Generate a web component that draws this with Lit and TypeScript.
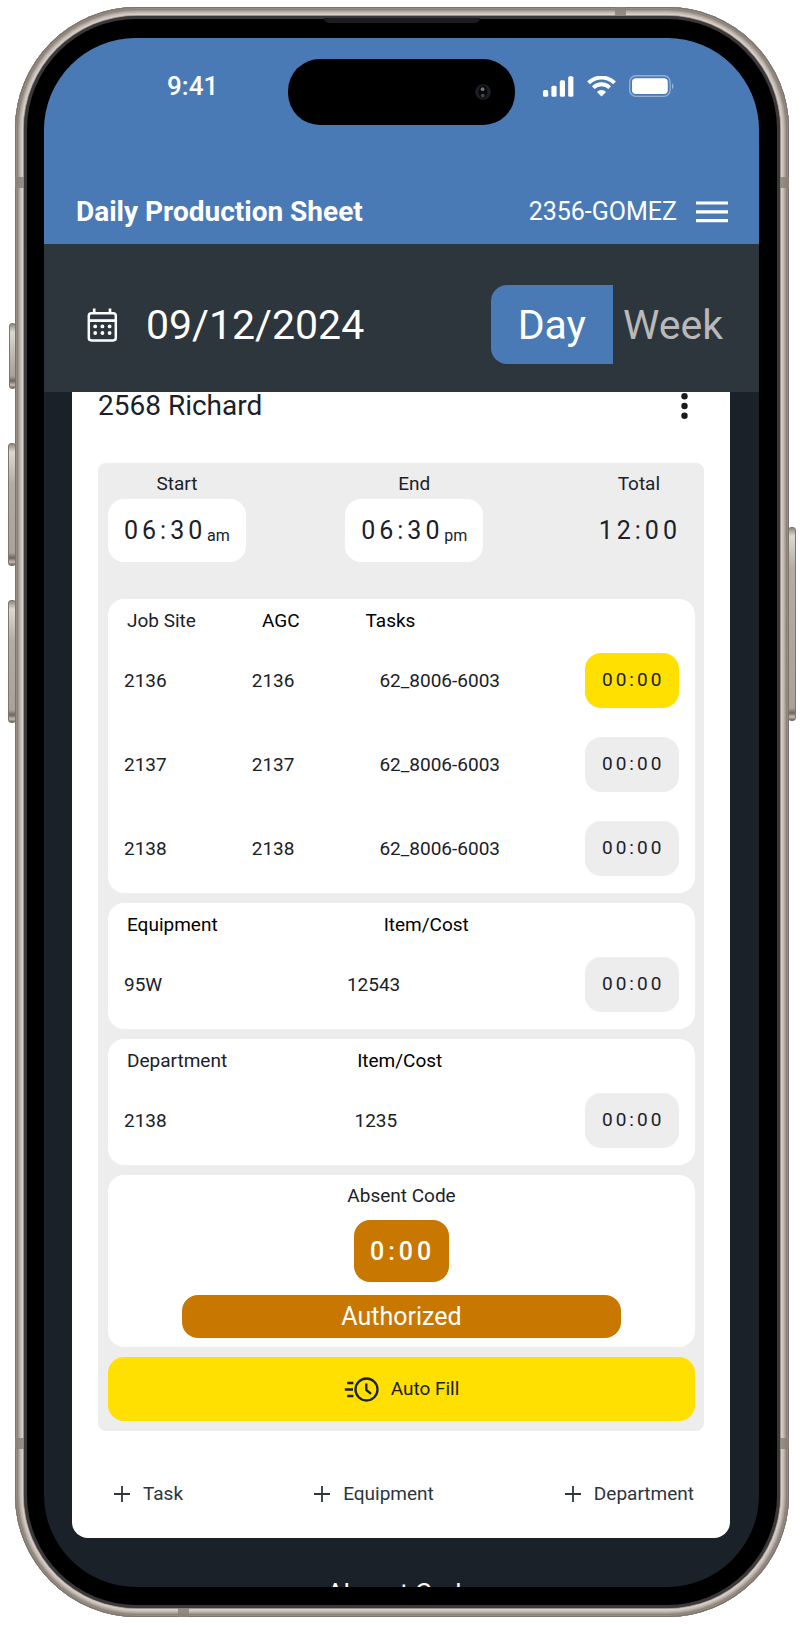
import { LitElement, html, css, svg, nothing } from "lit";
import { customElement, property, state } from "lit/decorators.js";
import { classMap } from "lit/directives/class-map.js";

interface Entry {
  cells: string[];
  hours: string;
  active?: boolean;
}

interface Section {
  id: string;
  headings: { text: string; strong?: boolean }[];
  entries: Entry[];
}

const SECTIONS: Section[] = [
  {
    id: "jobs",
    headings: [
      { text: "Job Site" },
      { text: "AGC", strong: true },
      { text: "Tasks", strong: true },
    ],
    entries: [
      { cells: ["2136", "2136", "62_8006-6003"], hours: "00:00", active: true },
      { cells: ["2137", "2137", "62_8006-6003"], hours: "00:00" },
      { cells: ["2138", "2138", "62_8006-6003"], hours: "00:00" },
    ],
  },
  {
    id: "equipment",
    headings: [
      { text: "Equipment", strong: true },
      { text: "Item/Cost", strong: true },
    ],
    entries: [{ cells: ["95W", "12543"], hours: "00:00" }],
  },
  {
    id: "department",
    headings: [{ text: "Department" }, { text: "Item/Cost", strong: true }],
    entries: [{ cells: ["2138", "1235"], hours: "00:00" }],
  },
];

const controls = css`
  * {
    box-sizing: border-box;
  }
  button,
  input {
    margin: 0;
    padding: 0;
    border: 0;
    background: none;
    color: inherit;
    font: inherit;
  }
  button {
    cursor: pointer;
  }
  svg {
    display: block;
    flex: none;
  }
`;

@customElement("phone-frame")
class PhoneFrame extends LitElement {
  static styles = [
    controls,
    css`
      :host {
        position: relative;
        display: flex;
        flex: 1;
        min-width: 0;
      }
      .metal,
      .rim,
      .bezel {
        display: flex;
        flex: 1;
        min-width: 0;
      }
      .metal {
        position: relative;
        padding: 9px;
        border-radius: 122px;
        background: #3a3839;
        box-shadow: inset 0 0 0 1px #7b736b, inset 0 0 0 2px #958c84,
          inset 0 0 0 3px #8b827a, inset 0 0 0 4px #a0978f,
          inset 0 0 0 5px #b3aaa2, inset 0 0 0 6px #c2b9b1,
          inset 0 0 0 7px #cfc6be, inset 0 0 0 8px #d9cfc8,
          inset 0 0 0 9px #99928c;
      }
      .rim {
        padding: 3px;
        border-radius: 113px;
        background: #3a3839;
      }
      .bezel {
        padding: 19px 18px 18px 17px;
        border-radius: 110px;
        background: #000;
      }
      .screen {
        display: flex;
        flex: 1;
        min-width: 0;
        border-radius: 92px;
        overflow: hidden;
      }
      .key {
        position: absolute;
        width: 7px;
        border: 1px solid #7d766d;
        border-radius: 3px;
        background: linear-gradient(
          #8f887f 0,
          #dcd8d1 8px,
          #b4ada5 40px,
          #aaa29a calc(100% - 12px),
          #6c655d calc(100% - 7px),
          #c4bdb4 calc(100% - 3px),
          #6c655d
        );
      }
      .action {
        left: -6px;
        top: 316px;
        height: 66px;
      }
      .louder {
        left: -7px;
        top: 436px;
        width: 8px;
        height: 123px;
      }
      .quieter {
        left: -7px;
        top: 593px;
        width: 8px;
        height: 123px;
      }
      .power {
        right: -7px;
        top: 520px;
        width: 8px;
        height: 194px;
      }
      .seam {
        position: absolute;
        background: #8a8279;
        opacity: 0.85;
      }
      .side {
        width: 9px;
        height: 11px;
      }
      .end {
        width: 11px;
        height: 9px;
      }
      .left {
        left: 0;
      }
      .right {
        right: 0;
      }
      .upper {
        top: 170px;
      }
      .lower {
        bottom: 168px;
      }
      .top {
        top: 0;
        right: 163px;
      }
      .bottom {
        bottom: 0;
        left: 163px;
      }
      .speaker {
        position: absolute;
        top: 11px;
        left: 50%;
        width: 156px;
        height: 5px;
        margin-left: -78px;
        border-radius: 0 0 5px 5px;
        background: #1e1b23;
      }
    `,
  ];

  render() {
    return html`
      <span class="key action"></span>
      <span class="key louder"></span>
      <span class="key quieter"></span>
      <span class="key power"></span>
      <div class="metal">
        <span class="seam side left upper"></span>
        <span class="seam side right upper"></span>
        <span class="seam side left lower"></span>
        <span class="seam side right lower"></span>
        <span class="seam end top"></span>
        <span class="seam end bottom"></span>
        <div class="rim">
          <div class="bezel">
            <div class="screen"><slot></slot></div>
          </div>
        </div>
        <span class="speaker"></span>
      </div>
    `;
  }
}

@customElement("status-bar")
class StatusBar extends LitElement {
  static styles = [
    controls,
    css`
      :host {
        display: grid;
        grid-template-columns: 1fr 227px 1fr;
        padding-top: 21px;
        color: #fff;
      }
      .clock {
        padding: 11px 0 0 123px;
        font-size: 26px;
        line-height: 32px;
        font-weight: 500;
      }
      .island {
        display: flex;
        align-items: center;
        justify-content: flex-end;
        height: 66px;
        padding-right: 24px;
        border-radius: 32px;
        background: #000;
      }
      .signals {
        display: flex;
        align-items: center;
        gap: 13px;
        height: 54px;
        padding-left: 28px;
      }
    `,
  ];

  render() {
    return html`
      <div class="clock">9:41</div>
      <div class="island">
        <svg width="16" height="16" viewBox="0 0 16 16" aria-hidden="true">
          <circle cx="8" cy="8" r="7.8" fill="#1c1f26" />
          <ellipse cx="8" cy="8" rx="4.4" ry="6.4" fill="#07080a" />
          <circle cx="7.6" cy="5.2" r="1.9" fill="#717376" />
          <circle cx="7.8" cy="11.6" r="1.9" fill="#46484b" />
        </svg>
      </div>
      <div class="signals">
        <svg width="31" height="21" viewBox="0 0 31 21" fill="#fff" aria-hidden="true">
          <rect x="0" y="14" width="5.2" height="6.8" rx="1.5" />
          <rect x="8.4" y="9.8" width="5.2" height="11" rx="1.5" />
          <rect x="16.8" y="4.2" width="5.2" height="16.6" rx="1.5" />
          <rect x="25.2" y="0.2" width="5.2" height="20.6" rx="1.5" />
        </svg>
        <svg width="29" height="21" viewBox="0 0 29 21" aria-hidden="true">
          <g fill="none" stroke="#fff" stroke-width="3.9">
            <path d="M1.5 7.5 A18.6 18.6 0 0 1 27.5 7.5" transform="translate(0 -0.6)" />
            <path d="M6.3 12.4 A11.8 11.8 0 0 1 22.7 12.4" transform="translate(0 -0.8)" />
          </g>
          <path fill="#fff" d="M14.5 20.4 L9.9 15.9 A6.8 6.8 0 0 1 19.1 15.9 Z" />
        </svg>
        <svg width="46" height="23" viewBox="0 0 46 23" aria-hidden="true">
          <rect x="0.7" y="0.8" width="40.4" height="20.6" rx="6.2" fill="none"
            stroke="#fff" stroke-opacity="0.4" stroke-width="1.4" />
          <rect x="3" y="3.2" width="35.8" height="15.8" rx="4" fill="#fff" />
          <path d="M43 8 A5 5 0 0 1 43 14.6 Z" fill="#fff" fill-opacity="0.45" />
        </svg>
      </div>
    `;
  }
}

@customElement("entry-section")
class EntrySection extends LitElement {
  @property({ attribute: false }) section!: Section;

  static styles = [
    controls,
    css`
      :host {
        display: block;
        padding: 11px 16px 17px;
        border-radius: 16px;
        background: #fff;
      }
      table,
      thead {
        display: block;
      }
      tbody {
        display: flex;
        flex-direction: column;
        gap: 29px;
        padding-top: 21px;
      }
      tr {
        display: flex;
        align-items: center;
        justify-content: space-between;
      }
      th,
      td {
        padding: 0;
        font-weight: 400;
        text-align: left;
      }
      thead tr {
        justify-content: flex-start;
        padding-left: 3px;
      }
      .jobs {
        gap: 66px;
      }
      .equipment {
        gap: 166px;
      }
      .department {
        gap: 130px;
      }
      .strong {
        color: #000;
      }
      .hours {
        display: block;
        width: 94px;
        height: 55px;
        padding: 0 0 2px 17px;
        border-radius: 16px;
        background: #ededed;
        letter-spacing: 3px;
      }
      .active {
        background: #ffe000;
      }
    `,
  ];

  render() {
    const { id, headings, entries } = this.section;
    return html`
      <table>
        <thead>
          <tr class=${id}>
            ${headings.map(
              (h) => html`<th scope="col" class=${classMap({ strong: !!h.strong })}>${h.text}</th>`
            )}
          </tr>
        </thead>
        <tbody>
          ${entries.map(
            (entry) => html`
              <tr>
                ${entry.cells.map((cell) => html`<td>${cell}</td>`)}
                <td>
                  <input
                    class=${classMap({ hours: true, active: !!entry.active })}
                    aria-label="Hours for ${entry.cells[0]}"
                    .value=${entry.hours}
                  />
                </td>
              </tr>
            `
          )}
        </tbody>
      </table>
    `;
  }
}

@customElement("app-root")
class AppRoot extends LitElement {
  @state() private view: "day" | "week" = "day";

  static styles = [
    controls,
    css`
      :host {
        display: flex;
        height: 100vh;
        padding: 7px 14px 8px 15px;
        box-sizing: border-box;
        background: #fff;
        color: #1a2129;
        font-family: Roboto, "Liberation Sans", sans-serif;
        font-size: 19px;
        line-height: 22px;
      }
      .app {
        display: flex;
        flex: 1;
        flex-direction: column;
        min-width: 0;
        background: #1a2129;
      }
      header {
        flex: none;
        background: #4a7ab6;
        color: #fff;
      }
      .titlebar {
        display: flex;
        align-items: center;
        gap: 19px;
        padding: 71px 31px 16px 32px;
      }
      h1 {
        flex: 1;
        margin: 0;
        font-size: 28px;
        line-height: 32px;
        font-weight: 700;
      }
      .user {
        font-size: 25px;
        line-height: 32px;
        font-weight: 400;
      }
      .datebar {
        display: flex;
        flex: none;
        align-items: center;
        justify-content: space-between;
        padding: 41px 26px 28px 43px;
        background: #2d353d;
        color: #fff;
        font-size: 41px;
        line-height: 48px;
      }
      .date {
        display: flex;
        align-items: center;
        gap: 28px;
      }
      .date input {
        width: 230px;
      }
      .views {
        display: flex;
      }
      .view {
        height: 79px;
        padding: 0 10px;
        color: #bab8b8;
      }
      .view.selected {
        padding: 0 27px;
        background: #4a7ab6;
        color: #fff;
      }
      .view:first-child {
        border-radius: 16px 0 0 16px;
      }
      .view:last-child {
        border-radius: 0 16px 16px 0;
      }
      main {
        flex: 1;
        min-height: 0;
        overflow: hidden;
        padding: 0 29px 0 28px;
      }
      .card {
        padding: 1px 26px 32px;
        border-radius: 0 0 16px 16px;
        background: #fff;
      }
      .person {
        display: flex;
        justify-content: space-between;
        padding-right: 16px;
      }
      h2 {
        margin: 0;
        font-size: 28px;
        line-height: 26px;
        font-weight: 400;
      }
      .sheet {
        display: flex;
        flex-direction: column;
        gap: 10px;
        margin-top: 44px;
        padding: 10px 9px 10px 10px;
        border-radius: 8px;
        background: #ededed;
      }
      .shift {
        display: flex;
        justify-content: space-between;
        padding-bottom: 27px;
      }
      .column {
        display: flex;
        flex-direction: column;
        align-items: center;
        gap: 4px;
      }
      .time {
        display: flex;
        align-items: center;
        height: 63px;
        padding: 0 16px;
        border-radius: 16px;
        background: #fff;
        font-size: 25px;
        line-height: 32px;
      }
      .time input {
        width: 83px;
        letter-spacing: 4px;
      }
      .meridiem {
        padding-top: 10px;
        font-size: 16px;
        line-height: 22px;
      }
      .total {
        padding: 0 14px 0 16px;
        background: none;
        letter-spacing: 4px;
      }
      .absent {
        display: flex;
        flex-direction: column;
        align-items: center;
        gap: 13px;
        padding: 10px 74px 9px;
        border-radius: 16px;
        background: #fff;
      }
      .code {
        width: 95px;
        height: 62px;
        padding-left: 16px;
        border-radius: 16px;
        background: #c87700;
        color: #fff;
        font-size: 25px;
        font-weight: 500;
        letter-spacing: 4px;
      }
      .authorized {
        width: 100%;
        height: 43px;
        border-radius: 16px;
        background: #c87700;
        color: #fff;
        font-size: 25px;
        line-height: 32px;
      }
      .autofill {
        display: flex;
        align-items: center;
        justify-content: center;
        gap: 12px;
        height: 64px;
        border-radius: 16px;
        background: #ffe000;
      }
      .adders {
        display: flex;
        justify-content: space-between;
        padding: 51px 10px 0 12px;
      }
      .adder {
        display: flex;
        align-items: center;
        gap: 9px;
        color: #2d353d;
      }
      .next {
        margin: 0;
        padding-top: 39px;
        color: #fff;
        font-size: 26px;
        line-height: 32px;
        font-weight: 400;
        text-align: center;
      }
    `,
  ];

  private renderView(id: "day" | "week", text: string) {
    const selected = this.view === id;
    return html`<button
      class=${classMap({ view: true, selected })}
      aria-pressed=${selected}
      @click=${() => (this.view = id)}
    >
      ${text}
    </button>`;
  }

  private renderTime(label: string, value: string, meridiem: string) {
    const id = label.toLowerCase();
    return html`
      <div class="column">
        <label for=${id}>${label}</label>
        <div class="time">
          <input id=${id} .value=${value} />
          ${meridiem ? html`<span class="meridiem">${meridiem}</span>` : nothing}
        </div>
      </div>
    `;
  }

  private renderAdder(text: string) {
    return html`<button class="adder">
      <svg width="24" height="24" viewBox="0 0 24 24" aria-hidden="true">
        <path d="M12 4 V20 M4 12 H20" stroke="currentColor" stroke-width="1.8" />
      </svg>
      ${text}
    </button>`;
  }

  render() {
    const dots = [0, 1, 2, 3, 4, 5].map(
      (i) => svg`<circle cx=${8.2 + (i % 3) * 7.2} cy=${18.4 + Math.floor(i / 3) * 6.6} r="1.9" />`
    );
    return html`
      <phone-frame>
        <div class="app">
          <header>
            <status-bar></status-bar>
            <div class="titlebar">
              <h1>Daily Production Sheet</h1>
              <span class="user">2356-GOMEZ</span>
              <button aria-label="Menu">
                <svg width="32" height="22" viewBox="0 0 32 22" fill="#fff" aria-hidden="true">
                  <path d="M0 0.4h32v3.2H0z M0 9.2h32v3.2H0z M0 18h32v3.2H0z" />
                </svg>
              </button>
            </div>
          </header>
          <div class="datebar">
            <div class="date">
              <button aria-label="Open calendar">
                <svg width="31" height="34" viewBox="0 0 31 34" aria-hidden="true">
                  <rect x="1.8" y="5.2" width="27" height="27.2" rx="2.6" fill="none"
                    stroke="#fff" stroke-width="2.5" />
                  <path d="M7.2 0.4V5 M23 0.4V5" stroke="#fff" stroke-width="2.7" />
                  <path d="M1.6 12.6H28.8" stroke="#fff" stroke-width="2.8" />
                  <g fill="#fff">${dots}</g>
                </svg>
              </button>
              <input aria-label="Date" .value=${"09/12/2024"} />
            </div>
            <div class="views">
              ${this.renderView("day", "Day")}${this.renderView("week", "Week")}
            </div>
          </div>
          <main>
            <section class="card">
              <div class="person">
                <h2>2568 Richard</h2>
                <button aria-label="More options">
                  <svg width="7" height="26" viewBox="0 0 7 26" fill="#1b1b1f" aria-hidden="true">
                    <circle cx="3.5" cy="3.3" r="3.2" />
                    <circle cx="3.5" cy="13" r="3.2" />
                    <circle cx="3.5" cy="22.7" r="3.2" />
                  </svg>
                </button>
              </div>
              <div class="sheet">
                <div class="shift">
                  ${this.renderTime("Start", "06:30", "am")}
                  ${this.renderTime("End", "06:30", "pm")}
                  <div class="column">
                    <span>Total</span>
                    <output class="time total">12:00</output>
                  </div>
                </div>
                ${SECTIONS.map((s) => html`<entry-section .section=${s}></entry-section>`)}
                <div class="absent">
                  <label for="code">Absent Code</label>
                  <input id="code" class="code" .value=${"0:00"} />
                  <button class="authorized">Authorized</button>
                </div>
                <button class="autofill">
                  <svg width="35" height="25" viewBox="0 0 35 25" fill="none" stroke="#1a2129"
                    stroke-width="2.3" aria-hidden="true">
                    <circle cx="22.5" cy="12.5" r="11" />
                    <path d="M22.3 6.6V13L27 16.8" />
                    <path d="M3.2 6H9.4 M0.8 12.5H9 M3.2 19H9.4" />
                  </svg>
                  Auto Fill
                </button>
              </div>
              <div class="adders">
                ${["Task", "Equipment", "Department"].map((t) => this.renderAdder(t))}
              </div>
            </section>
            <h3 class="next">Absent Code</h3>
          </main>
        </div>
      </phone-frame>
    `;
  }
}
